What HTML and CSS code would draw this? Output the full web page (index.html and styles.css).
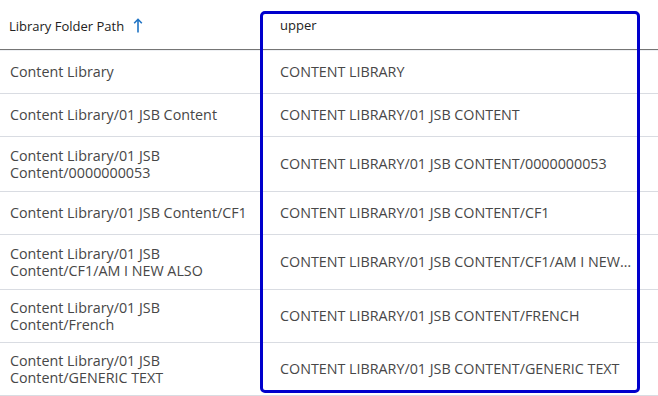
FILE: index.html
```html
<!DOCTYPE html>
<html>
<head>
<meta charset="utf-8">
<link rel="stylesheet" href="styles.css">
</head>
<body>
<div class="grid">
  <div class="row head">
    <div class="cell c1">Library Folder Path <svg class="arrow" width="10" height="16" viewBox="0 0 10 16"><path d="M5 15.5V2.5M1.2 6.3L5 2.3l3.8 4" fill="none" stroke="#1f73c4" stroke-width="1.6"/></svg></div>
    <div class="cell c2">upper</div>
  </div>
  <div class="row"><div class="cell c1">Content Library</div><div class="cell c2">CONTENT LIBRARY</div></div>
  <div class="row"><div class="cell c1">Content Library/01 JSB Content</div><div class="cell c2">CONTENT LIBRARY/01 JSB CONTENT</div></div>
  <div class="row tall"><div class="cell c1">Content Library/01 JSB<br>Content/0000000053</div><div class="cell c2">CONTENT LIBRARY/01 JSB CONTENT/0000000053</div></div>
  <div class="row"><div class="cell c1">Content Library/01 JSB Content/CF1</div><div class="cell c2">CONTENT LIBRARY/01 JSB CONTENT/CF1</div></div>
  <div class="row tall"><div class="cell c1">Content Library/01 JSB<br>Content/CF1/AM I NEW ALSO</div><div class="cell c2">CONTENT LIBRARY/01 JSB CONTENT/CF1/AM I NEW ALSO</div></div>
  <div class="row short"><div class="cell c1">Content Library/01 JSB<br>Content/French</div><div class="cell c2">CONTENT LIBRARY/01 JSB CONTENT/FRENCH</div></div>
  <div class="row short"><div class="cell c1">Content Library/01 JSB<br>Content/GENERIC TEXT</div><div class="cell c2">CONTENT LIBRARY/01 JSB CONTENT/GENERIC TEXT</div></div>
  <div class="highlight"></div>
</div>
</body>
</html>
```

FILE: styles.css
```css
html, body {
  margin: 0;
  padding: 0;
  background: #ffffff;
}
body {
  font-family: "Open Sans", "Noto Sans", sans-serif;
  color: #474747;
  overflow: hidden;
}
.grid {
  position: relative;
  width: 658px;
}
.row {
  display: grid;
  grid-template-columns: 260px 1fr;
  min-height: 43px;
  border-bottom: 1px solid #d9dce2;
  box-sizing: border-box;
}
.row.tall {
  min-height: 55px;
}
.row.short {
  min-height: 53px;
}
.row.head {
  height: 50px;
  border-bottom: 1px solid #757575;
  box-shadow: 0 1px 0 #eef0f3;
  margin-bottom: 1px;
}
.cell {
  display: flex;
  align-items: center;
  font-size: 14.3px;
  line-height: 17.5px;
  padding: 0 10px;
  min-width: 0;
}
.c2 {
  display: block;
  align-self: center;
  padding: 0 25px 0 20px;
  white-space: nowrap;
  overflow: hidden;
  text-overflow: ellipsis;
}
.head .cell {
  font-size: 13px;
  color: #222;
  padding-top: 4px;
  padding-left: 9px;
}
.head .c2 {
  padding-left: 20px;
  padding-top: 2px;
}
.arrow {
  margin-left: 9px;
  margin-top: -3px;
}
.highlight {
  position: absolute;
  left: 260px;
  top: 11px;
  width: 380px;
  height: 382px;
  border: 3px solid #0000cc;
  border-radius: 5px;
  box-sizing: border-box;
  pointer-events: none;
}
```
